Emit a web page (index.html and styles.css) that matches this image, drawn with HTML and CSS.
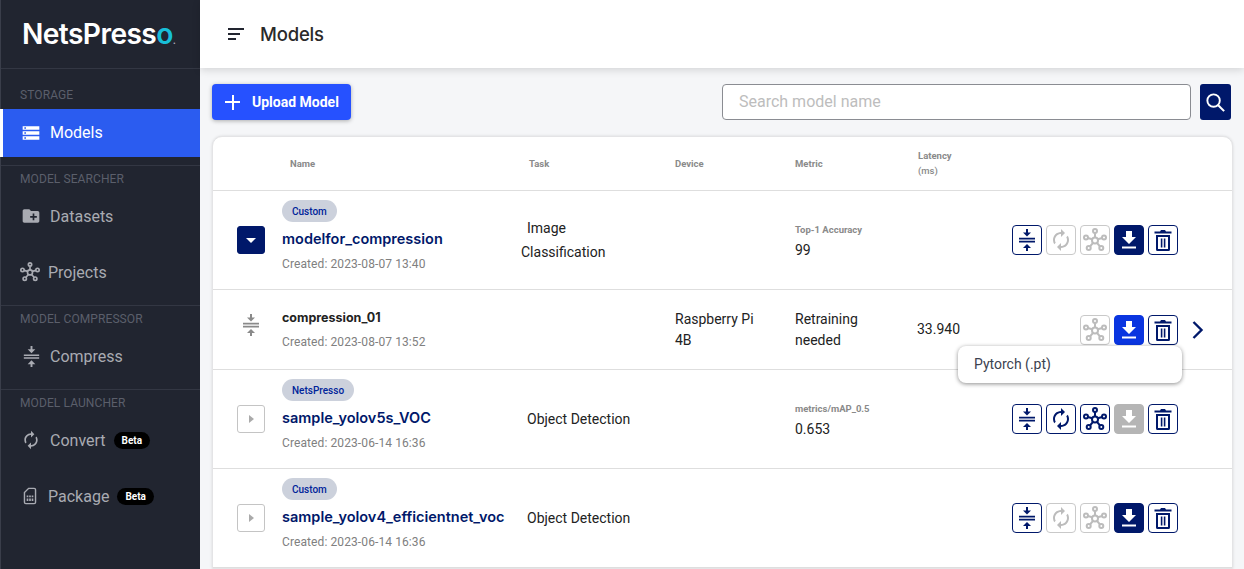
FILE: index.html
```html
<!DOCTYPE html>
<html lang="en">
<head>
<meta charset="utf-8">
<title>NetsPresso Models</title>
<link rel="stylesheet" href="styles.css">
</head>
<body>
<svg class="sprite" aria-hidden="true">
  <symbol id="i-storage" viewBox="0 0 24 24"><path d="M2 20h20v-4H2v4zm2-3h2v2H4v-2zM2 4v4h20V4H2zm4 3H4V5h2v2zm-4 7h20v-4H2v4zm2-3h2v2H4v-2z"/></symbol>
  <symbol id="i-folder" viewBox="0 0 24 24"><path d="M20 6h-8l-2-2H4c-1.11 0-1.99.89-1.99 2L2 18c0 1.11.89 2 2 2h16c1.11 0 2-.89 2-2V8c0-1.11-.89-2-2-2zm-1 8h-3v3h-2v-3h-3v-2h3V9h2v3h3v2z"/></symbol>
  <symbol id="i-compress" viewBox="0 0 24 24"><path d="M8 20h3v3h2v-3h3l-4-4-4 4zm8-15.500h-3V1h-2v3.500H8l4 4 4-4zM4 9.800v1.600h16V9.800H4zm0 3h16v1.600H4z"/></symbol>
  <symbol id="i-sync" viewBox="0 0 24 24"><path d="M12 4V1l4 4-4 4V6c-3.310 0-6 2.690-6 6 0 1.010.25 1.970.7 2.800l-1.460 1.460C4.460 15.030 4 13.570 4 12c0-4.420 3.580-8 8-8zm0 14c3.310 0 6-2.690 6-6 0-1.010-.25-1.970-.7-2.800l1.460-1.460C19.540 8.970 20 10.430 20 12c0 4.420-3.580 8-8 8v3l-4-4 4-4v3z"/></symbol>
  <symbol id="i-hub" viewBox="0 0 24 24"><g fill="none" stroke="currentColor" stroke-width="2"><circle cx="12" cy="12.500" r="3"/><circle cx="12" cy="3" r="2"/><circle cx="3" cy="9.500" r="2"/><circle cx="21" cy="9.500" r="2"/><circle cx="5.700" cy="20" r="2"/><circle cx="18.300" cy="20" r="2"/><path d="M12 5v4.500M4.900 10l4.300 1.300M19.100 10l-4.300 1.300M7 18.500l3-3.600M17 18.500l-3-3.600"/></g></symbol>
  <symbol id="i-download" viewBox="0 0 24 24"><path d="M19 9h-4V3H9v6H5l7 7 7-7zM5 18.500v2h14v-2H5z"/></symbol>
  <symbol id="i-trash" viewBox="0 0 24 24"><path d="M5 7h14v14.500a1.500 1.500 0 0 1-1.500 1.500h-11A1.500 1.500 0 0 1 5 21.500V7zm2 2v12h10V9H7zM9 3.500 10 2h4l1 1.500h5.500v2h-17v-2H9zM9.800 10.500h1.600v9H9.800zM12.800 10.500h1.600v9h-1.600z"/></symbol>
  <symbol id="i-sim" viewBox="0 0 24 24"><path d="M10 2h7a2.500 2.500 0 0 1 2.500 2.500v15A2.500 2.500 0 0 1 17 22H7a2.500 2.500 0 0 1-2.500-2.500V7.500L10 2zm.700 1.700L6.200 8.200v11.300a.8.800 0 0 0 .8.800h10a.8.800 0 0 0 .8-.8v-15a.8.800 0 0 0-.8-.8h-6.300zM8 11.500h2v2H8zm3 0h2v2h-2zm3 0h2v2h-2zM8 15h2v3H8zm3 0h2v3h-2zm3 0h2v3h-2z"/></symbol>
</svg>

<div class="app">
  <aside class="sidebar">
    <div class="logo">NetsPress<span class="logo-o">o</span><span class="logo-dot">.</span></div>
    <section class="nav-section first">
      <h2 class="nav-label">STORAGE</h2>
      <a class="nav-item active"><svg class="nav-icon"><use href="#i-storage"/></svg><span>Models</span></a>
    </section>
    <section class="nav-section">
      <h2 class="nav-label">MODEL SEARCHER</h2>
      <a class="nav-item"><svg class="nav-icon"><use href="#i-folder"/></svg><span>Datasets</span></a>
      <a class="nav-item tight"><svg class="nav-icon wide"><use href="#i-hub"/></svg><span>Projects</span></a>
    </section>
    <section class="nav-section">
      <h2 class="nav-label">MODEL COMPRESSOR</h2>
      <a class="nav-item"><svg class="nav-icon comp"><use href="#i-compress"/></svg><span>Compress</span></a>
    </section>
    <section class="nav-section">
      <h2 class="nav-label">MODEL LAUNCHER</h2>
      <a class="nav-item"><svg class="nav-icon"><use href="#i-sync"/></svg><span>Convert</span><b class="beta">Beta</b></a>
      <a class="nav-item tight"><svg class="nav-icon wide"><use href="#i-sim"/></svg><span>Package</span><b class="beta">Beta</b></a>
    </section>
  </aside>

  <div class="main">
    <header class="topbar">
      <span class="menu-toggle"><i></i><i></i><i></i></span>
      <h1 class="page-title">Models</h1>
    </header>
    <div class="content">
      <div class="toolbar">
        <button class="upload"><span class="plus"></span>Upload Model</button>
        <div class="search">
          <input class="search-input" placeholder="Search model name">
          <button class="search-btn"><svg viewBox="0 0 24 24"><circle cx="10" cy="10" r="6.500" fill="none" stroke="currentColor" stroke-width="2"/><path d="m14.800 14.800 6.200 6.200" stroke="currentColor" stroke-width="2.200"/></svg></button>
        </div>
      </div>

      <div class="card">
        <div class="row head">
          <div></div>
          <div class="th th-name">Name</div>
          <div class="th th-task">Task</div>
          <div class="th">Device</div>
          <div class="th">Metric</div>
          <div class="th th-lat">Latency<br><span class="th-unit">(ms)</span></div>
          <div></div>
        </div>

        <div class="row tall">
          <div class="cell-exp"><button class="exp open"><span class="tri-down"></span></button></div>
          <div class="name-cell">
            <span class="badge">Custom</span>
            <div class="model-name">modelfor_compression</div>
            <div class="created">Created: 2023-08-07 13:40</div>
          </div>
          <div class="task"><div class="task-l1">Image</div><div class="task-l2">Classification</div></div>
          <div></div>
          <div class="metric"><div class="metric-label">Top-1 Accuracy</div><div class="metric-val">99</div></div>
          <div></div>
          <div class="actions">
            <button class="act"><svg><use href="#i-compress"/></svg></button>
            <button class="act off"><svg><use href="#i-sync"/></svg></button>
            <button class="act off"><svg><use href="#i-hub"/></svg></button>
            <button class="act solid"><svg><use href="#i-download"/></svg></button>
            <button class="act"><svg><use href="#i-trash"/></svg></button>
          </div>
        </div>

        <div class="row short">
          <div class="cell-exp"><svg class="child-icon"><use href="#i-compress"/></svg></div>
          <div class="name-cell">
            <div class="model-name child">compression_01</div>
            <div class="created child-created">Created: 2023-08-07 13:52</div>
          </div>
          <div></div>
          <div class="text-cell">Raspberry Pi 4B</div>
          <div class="text-cell">Retraining needed</div>
          <div class="text-cell">33.940</div>
          <div class="actions">
            <button class="act off"><svg><use href="#i-hub"/></svg></button>
            <button class="act bright"><svg><use href="#i-download"/></svg></button>
            <button class="act"><svg><use href="#i-trash"/></svg></button>
            <svg class="chevron" viewBox="0 0 14 20"><path d="m2.500 2 8 8-8 8" fill="none" stroke="currentColor" stroke-width="2.400"/></svg>
            <div class="popover">Pytorch (.pt)</div>
          </div>
        </div>

        <div class="row tall">
          <div class="cell-exp"><button class="exp"><span class="tri-right"></span></button></div>
          <div class="name-cell">
            <span class="badge">NetsPresso</span>
            <div class="model-name">sample_yolov5s_VOC</div>
            <div class="created">Created: 2023-06-14 16:36</div>
          </div>
          <div class="task">Object Detection</div>
          <div></div>
          <div class="metric"><div class="metric-label">metrics/mAP_0.5</div><div class="metric-val">0.653</div></div>
          <div></div>
          <div class="actions">
            <button class="act"><svg><use href="#i-compress"/></svg></button>
            <button class="act"><svg><use href="#i-sync"/></svg></button>
            <button class="act"><svg><use href="#i-hub"/></svg></button>
            <button class="act grey"><svg><use href="#i-download"/></svg></button>
            <button class="act"><svg><use href="#i-trash"/></svg></button>
          </div>
        </div>

        <div class="row tall">
          <div class="cell-exp"><button class="exp"><span class="tri-right"></span></button></div>
          <div class="name-cell">
            <span class="badge">Custom</span>
            <div class="model-name">sample_yolov4_efficientnet_voc</div>
            <div class="created">Created: 2023-06-14 16:36</div>
          </div>
          <div class="task">Object Detection</div>
          <div></div>
          <div></div>
          <div></div>
          <div class="actions">
            <button class="act"><svg><use href="#i-compress"/></svg></button>
            <button class="act off"><svg><use href="#i-sync"/></svg></button>
            <button class="act off"><svg><use href="#i-hub"/></svg></button>
            <button class="act solid"><svg><use href="#i-download"/></svg></button>
            <button class="act"><svg><use href="#i-trash"/></svg></button>
          </div>
        </div>
      </div>
    </div>
  </div>
</div>
</body>
</html>
```
FILE: styles.css
```css
* { box-sizing: border-box; }
html, body { margin: 0; height: 100%; overflow: hidden; }
body { font-family: Roboto, "Liberation Sans", sans-serif; color: #222; background: #f5f6f8; }
.sprite { display: none; }
button { font-family: inherit; padding: 0; cursor: pointer; }

.app { display: flex; height: 569px; overflow: hidden; }

/* sidebar */
.sidebar { flex: 0 0 200px; background: #212530; border-left: 1px solid #3a3e4a; display: flex; flex-direction: column; }
.logo { height: 68px; padding: 17px 0 0 22px; margin-left: -1px; font-family: Inter, sans-serif; font-weight: 600; font-size: 28.200px; line-height: 34px; letter-spacing: -.6px; color: #fff; white-space: nowrap; }
.logo-o { color: #18bfd8; }
.logo-dot { font-size: 10px; color: #aab; letter-spacing: 0; }
.nav-section { border-top: 1px solid #333743; padding-bottom: 9px; }
.nav-section.first { padding-top: 13px; padding-bottom: 8px; }
.nav-label { margin: 0; height: 26px; padding-left: 19px; font-size: 12px; line-height: 26px; font-weight: 400; color: #5b5f6b; letter-spacing: .1px; }
.first .nav-label { margin-bottom: 1px; }
.nav-item { display: flex; align-items: center; height: 48px; padding-left: 20px; color: #a9abb2; font-size: 16px; }
.nav-item + .nav-item { margin-top: 8px; }
.nav-item.active { background: #2b5cf0; color: #fff; border-left: 3px solid #fff; margin-left: -1px; padding-left: 18px; }
.nav-item.active span { position: relative; top: -1px; }
.nav-icon { width: 20px; height: 20px; fill: currentColor; flex: none; margin-right: 9px; }
.nav-icon.comp { width: 23px; height: 23px; margin: 0 7.500px 0 -1.500px; }
.nav-item.tight { padding-left: 19px; }
.nav-icon.wide { width: 20px; margin-right: 8px; }
.beta { margin-left: 8px; height: 17px; padding: 0 8px; background: #000; color: #fff; border-radius: 9px; font-size: 10px; font-weight: 700; line-height: 17px; }

/* main */
.main { flex: 1; min-width: 0; display: flex; flex-direction: column; }
.topbar { flex: 0 0 68px; background: #fff; display: flex; align-items: center; padding-left: 28px; box-shadow: 0 2px 8px rgba(0,0,0,.14); position: relative; }
.menu-toggle { display: flex; flex-direction: column; gap: 3px; width: 16px; margin-right: 16px; }
.menu-toggle i { display: block; height: 2px; background: #222530; }
.menu-toggle i:nth-child(1) { width: 16px; }
.menu-toggle i:nth-child(2) { width: 12px; }
.menu-toggle i:nth-child(3) { width: 8px; }
.page-title { margin: 0; font-family: Inter, sans-serif; font-size: 18.500px; font-weight: 500; color: #2a2a2a; letter-spacing: -.2px; }
.content { flex: 1; padding: 16px 11px 0 12px; min-height: 0; }

.toolbar { display: flex; justify-content: space-between; height: 36px; margin-bottom: 16px; }
.upload { display: flex; align-items: center; width: 139px; height: 36px; border: 0; border-radius: 4px; background: #2651ff; color: #fff; font-size: 14px; font-weight: 700; box-shadow: 0 1px 4px rgba(0,0,0,.3); padding-left: 13px; }
.plus { position: relative; width: 15px; height: 15px; margin-right: 12px; background: linear-gradient(#fff,#fff) center/15px 2px no-repeat, linear-gradient(#fff,#fff) center/2px 15px no-repeat; }
.search { display: flex; gap: 9px; margin-right: 2px; }
.search-input { width: 469px; height: 36px; border: 1px solid #8a8c92; border-radius: 4px; padding: 0 16px 2px; font: 16px Roboto, sans-serif; background: #fff; outline: 0; }
.search-input::placeholder { color: #bdbdbd; }
.search-btn { width: 31px; height: 36px; border: 0; border-radius: 3px; background: #00186a; color: #fff; display: flex; align-items: center; justify-content: center; }
.search-btn svg { width: 23px; height: 23px; }

/* table */
.card { background: #fff; border: 1px solid #e4e4e6; border-radius: 10px 10px 0 0; box-shadow: 0 0 3px rgba(0,0,0,.12); }
.row { display: grid; grid-template-columns: 69px 245px 148px 120px 122px 80px 1fr; align-items: center; border-bottom: 1px solid #dedede; position: relative; }
.head { height: 54px; }
.tall { height: 99px; }
.short { height: 80px; }
.th { font-size: 9.500px; font-weight: 700; color: #8a8a8a; line-height: 15px; }
.th-name { padding-left: 8px; }
.th-task { padding-left: 2px; }
.th-lat { padding: 0 0 2px 1px; }
.th-unit { font-weight: 500; }

.cell-exp { display: flex; justify-content: flex-end; padding-right: 17px; }
.exp { width: 28px; height: 28px; border: 1px solid #c4c4c4; border-radius: 3px; background: #fff; display: flex; align-items: center; justify-content: center; }
.exp.open { background: #00186a; border-color: #00186a; }
.tri-down { width: 0; height: 0; border: 5px solid transparent; border-top: 5px solid #fff; border-bottom: 0; }
.tri-right { width: 0; height: 0; border: 4.500px solid transparent; border-left: 5px solid #aaa; border-right: 0; }
.child-icon { width: 24px; height: 24px; fill: #8a8a8a; margin: 0 2px 9px 0; }

.name-cell { display: flex; flex-direction: column; align-items: flex-start; padding-bottom: 9px; }
.short .name-cell { padding-bottom: 3px; }
.badge { height: 22px; padding: 0 10px; border-radius: 11px; background: #ccd1dc; color: #00249a; font-size: 10px; font-weight: 500; line-height: 23px; margin-bottom: 6px; }
.model-name { font-family: Inter, sans-serif; font-size: 14.500px; font-weight: 600; line-height: 22px; color: #00186a; white-space: nowrap; }
.model-name.child { color: #222; font-size: 12.500px; font-weight: 700; line-height: 24px; }
.created { font-size: 12px; line-height: 16px; margin-top: 6px; color: #808080; letter-spacing: .1px; }
.created.child-created { margin-top: 4px; }
.task { font-size: 14px; line-height: 24px; color: #222; }
.task-l1 { margin-left: 0; }
.task-l2 { margin-left: -6px; }
.text-cell { font-size: 14px; line-height: 21px; color: #222; max-width: 90px; }
.metric { padding-top: 3px; }
.metric-label { font-size: 9.500px; font-weight: 700; color: #8a8a8a; line-height: 14px; margin-bottom: 3px; white-space: nowrap; }
.metric-val { font-size: 14px; line-height: 20px; color: #222; }

.actions { display: flex; gap: 4px; justify-content: flex-end; padding-right: 54px; position: relative; }
.act { width: 30px; height: 30px; border: 1px solid #00186a; border-radius: 4px; background: #fff; color: #00186a; display: flex; align-items: center; justify-content: center; }
.act svg { width: 24px; height: 24px; fill: currentColor; }
.act.off { border-color: #c9c9c9; color: #bcbcbc; }
.act.solid { background: #00186a; color: #fff; }
.act.bright { background: #0a35e0; border-color: #0a35e0; color: #fff; }
.act.grey { background: #b5b5b5; border-color: #b5b5b5; color: #fff; }
.chevron { position: absolute; right: 27px; top: 5px; width: 14px; height: 20px; color: #00186a; }
.popover { position: absolute; right: 50px; top: 31px; z-index: 2; width: 224px; height: 37px; background: #fff; border-radius: 8px; box-shadow: 0 1px 4px rgba(0,0,0,.45); padding-left: 16px; font-size: 14px; line-height: 36px; color: #3c4250; }
```
